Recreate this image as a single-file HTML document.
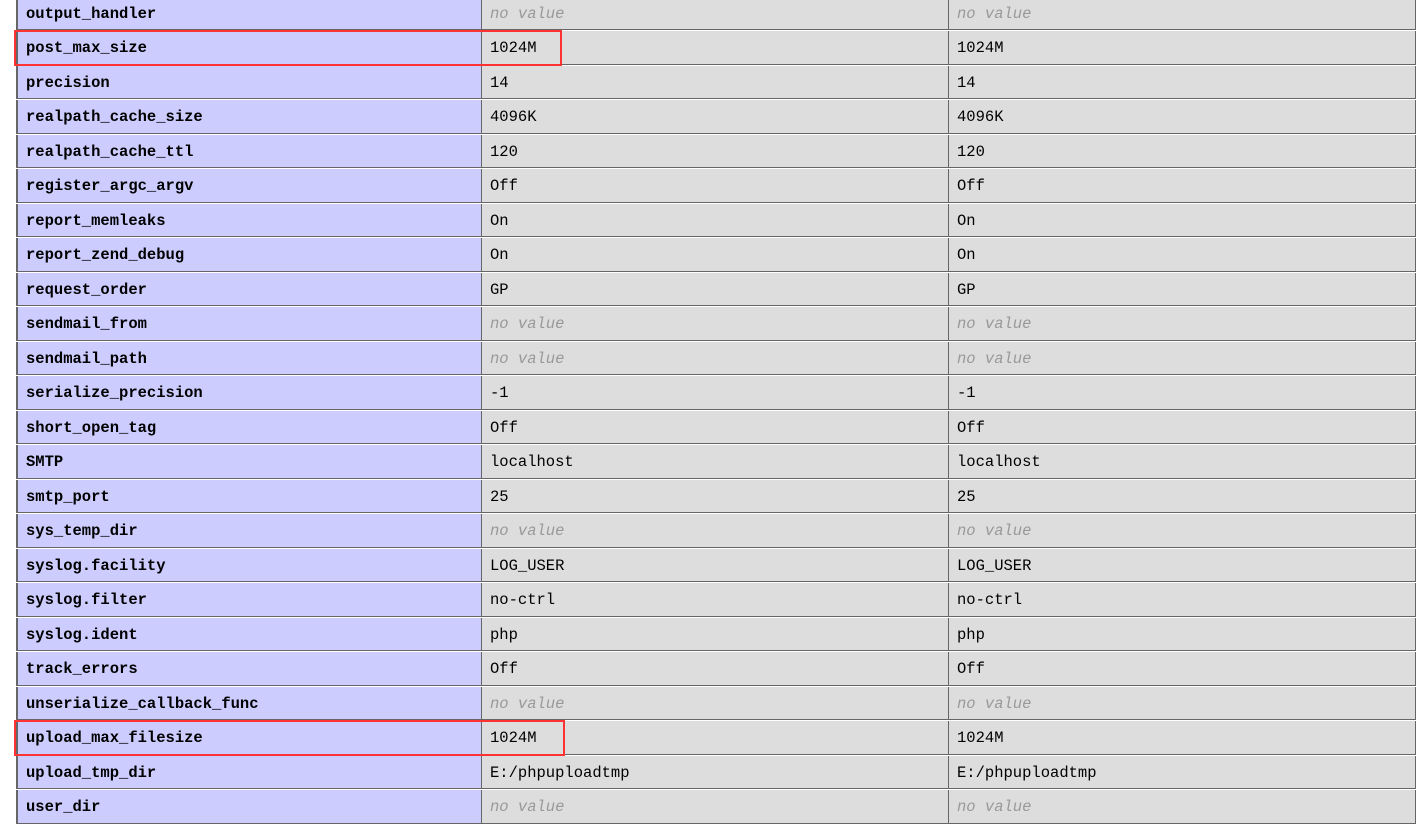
<!DOCTYPE html>
<html><head><meta charset="utf-8"><style>
html,body{margin:0;padding:0;width:1422px;height:793px;overflow:hidden;background:#fff}
.r{position:absolute;left:16px;width:1400px;height:34.5px;}
.c{position:absolute;top:0;height:33.5px;line-height:34px;font-family:"Liberation Mono","Noto Serif CJK SC",monospace;font-size:15.5px;color:#000;box-sizing:border-box;padding-left:8px;white-space:nowrap;border-bottom:1px solid #666}
.e{left:0;width:466px;background:#ccf;font-weight:bold;border-left:2px solid #666;border-right:1px solid #666}
.v1{left:466px;width:467px;background:#ddd;border-right:1px solid #666}
.v2{left:933px;width:467px;background:#ddd;border-right:1px solid #666}
.n{color:#999;font-style:italic}
.box{position:absolute;border:2px solid #f33;box-sizing:border-box}
</style></head><body>
<div id="t"></div>
<script>
var rows=[["output_handler","~"],["post_max_size","1024M"],["precision","14"],["realpath_cache_size","4096K"],["realpath_cache_ttl","120"],["register_argc_argv","Off"],["report_memleaks","On"],["report_zend_debug","On"],["request_order","GP"],["sendmail_from","~"],["sendmail_path","~"],["serialize_precision","-1"],["short_open_tag","Off"],["SMTP","localhost"],["smtp_port","25"],["sys_temp_dir","~"],["syslog.facility","LOG_USER"],["syslog.filter","no-ctrl"],["syslog.ident","php"],["track_errors","Off"],["unserialize_callback_func","~"],["upload_max_filesize","1024M"],["upload_tmp_dir","E:/phpuploadtmp"],["user_dir","~"]];
var h="";
rows.forEach(function(r,i){var top=-3.5+34.5*i;var v=r[1]=="~"?'<span class="n">no value</span>':r[1];
h+='<div class="r" style="top:'+top+'px"><div class="c e">'+r[0]+'</div><div class="c v1">'+v+'</div><div class="c v2">'+v+'</div></div>';});
document.getElementById("t").innerHTML=h;
</script>
<div class="box" style="left:14px;top:30px;width:548px;height:36px"></div>
<div class="box" style="left:14px;top:720px;width:551px;height:36px"></div>
</body></html>
